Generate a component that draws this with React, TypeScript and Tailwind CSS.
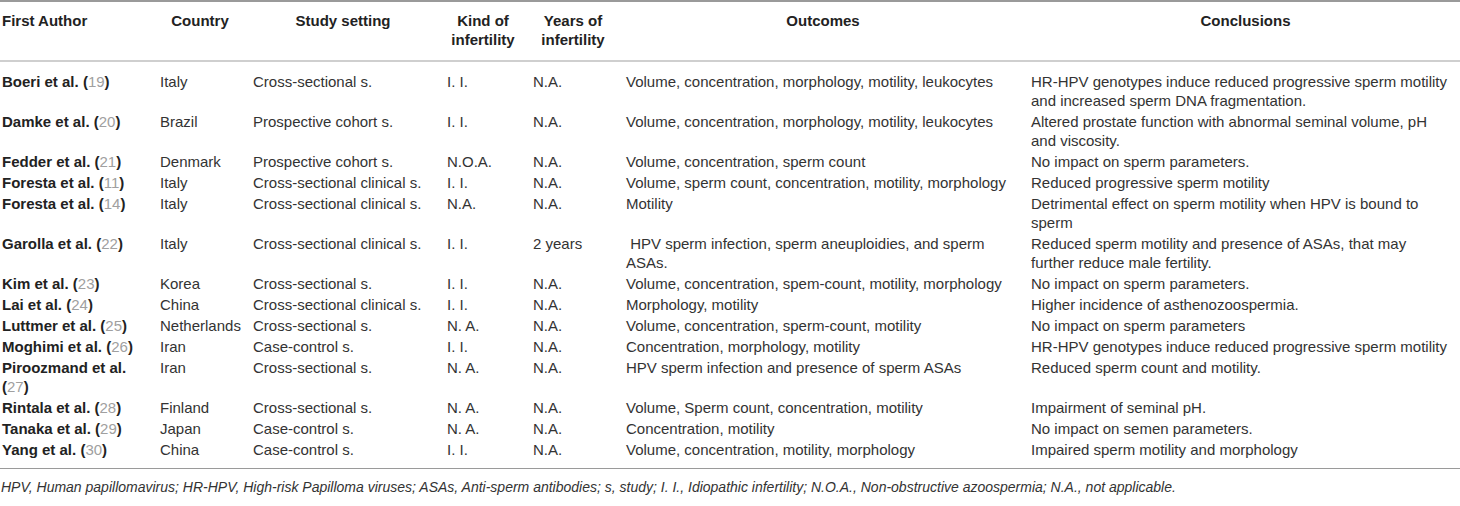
import React from "react";

type Row = {
  author: string;
  ref: string;
  breakRef?: boolean;
  country: string;
  setting: string;
  kind: string;
  years: string;
  outcomes: string[];
  conclusions: string[];
};

const rows: Row[] = [
  {
    author: "Boeri et al.",
    ref: "19",
    country: "Italy",
    setting: "Cross-sectional s.",
    kind: "I. I.",
    years: "N.A.",
    outcomes: ["Volume, concentration, morphology, motility, leukocytes"],
    conclusions: [
      "HR-HPV genotypes induce reduced progressive sperm motility",
      "and increased sperm DNA fragmentation.",
    ],
  },
  {
    author: "Damke et al.",
    ref: "20",
    country: "Brazil",
    setting: "Prospective cohort s.",
    kind: "I. I.",
    years: "N.A.",
    outcomes: ["Volume, concentration, morphology, motility, leukocytes"],
    conclusions: [
      "Altered prostate function with abnormal seminal volume, pH",
      "and viscosity.",
    ],
  },
  {
    author: "Fedder et al.",
    ref: "21",
    country: "Denmark",
    setting: "Prospective cohort s.",
    kind: "N.O.A.",
    years: "N.A.",
    outcomes: ["Volume, concentration, sperm count"],
    conclusions: ["No impact on sperm parameters."],
  },
  {
    author: "Foresta et al.",
    ref: "11",
    country: "Italy",
    setting: "Cross-sectional clinical s.",
    kind: "I. I.",
    years: "N.A.",
    outcomes: ["Volume, sperm count, concentration, motility, morphology"],
    conclusions: ["Reduced progressive sperm motility"],
  },
  {
    author: "Foresta et al.",
    ref: "14",
    country: "Italy",
    setting: "Cross-sectional clinical s.",
    kind: "N.A.",
    years: "N.A.",
    outcomes: ["Motility"],
    conclusions: [
      "Detrimental effect on sperm motility when HPV is bound to",
      "sperm",
    ],
  },
  {
    author: "Garolla et al.",
    ref: "22",
    country: "Italy",
    setting: "Cross-sectional clinical s.",
    kind: "I. I.",
    years: "2 years",
    outcomes: ["\u00a0HPV sperm infection, sperm aneuploidies, and sperm", "ASAs."],
    conclusions: [
      "Reduced sperm motility and presence of ASAs, that may",
      "further reduce male fertility.",
    ],
  },
  {
    author: "Kim et al.",
    ref: "23",
    country: "Korea",
    setting: "Cross-sectional s.",
    kind: "I. I.",
    years: "N.A.",
    outcomes: ["Volume, concentration, spem-count, motility, morphology"],
    conclusions: ["No impact on sperm parameters."],
  },
  {
    author: "Lai et al.",
    ref: "24",
    country: "China",
    setting: "Cross-sectional clinical s.",
    kind: "I. I.",
    years: "N.A.",
    outcomes: ["Morphology, motility"],
    conclusions: ["Higher incidence of asthenozoospermia."],
  },
  {
    author: "Luttmer et al.",
    ref: "25",
    country: "Netherlands",
    setting: "Cross-sectional s.",
    kind: "N. A.",
    years: "N.A.",
    outcomes: ["Volume, concentration, sperm-count, motility"],
    conclusions: ["No impact on sperm parameters"],
  },
  {
    author: "Moghimi et al.",
    ref: "26",
    country: "Iran",
    setting: "Case-control s.",
    kind: "I. I.",
    years: "N.A.",
    outcomes: ["Concentration, morphology, motility"],
    conclusions: ["HR-HPV genotypes induce reduced progressive sperm motility"],
  },
  {
    author: "Piroozmand et al.",
    ref: "27",
    breakRef: true,
    country: "Iran",
    setting: "Cross-sectional s.",
    kind: "N. A.",
    years: "N.A.",
    outcomes: ["HPV sperm infection and presence of sperm ASAs"],
    conclusions: ["Reduced sperm count and motility."],
  },
  {
    author: "Rintala et al.",
    ref: "28",
    country: "Finland",
    setting: "Cross-sectional s.",
    kind: "N. A.",
    years: "N.A.",
    outcomes: ["Volume, Sperm count, concentration, motility"],
    conclusions: ["Impairment of seminal pH."],
  },
  {
    author: "Tanaka et al.",
    ref: "29",
    country: "Japan",
    setting: "Case-control s.",
    kind: "N. A.",
    years: "N.A.",
    outcomes: ["Concentration, motility"],
    conclusions: ["No impact on semen parameters."],
  },
  {
    author: "Yang et al.",
    ref: "30",
    country: "China",
    setting: "Case-control s.",
    kind: "I. I.",
    years: "N.A.",
    outcomes: ["Volume, concentration, motility, morphology"],
    conclusions: ["Impaired sperm motility and morphology"],
  },
];

const Lines = ({ lines }: { lines: string[] }) => (
  <>
    {lines.map((l, i) => (
      <div key={i}>{l}</div>
    ))}
  </>
);

export default function App() {
  return (
    <div className="w-[1460px] h-[506px] bg-white text-[#333] font-['Liberation_Sans',Arial,sans-serif] text-[15px] leading-[19px] overflow-hidden">
      <table className="w-[1460px] table-fixed border-collapse">
        <colgroup>
          <col className="w-[160px]" />
          <col className="w-[93px]" />
          <col className="w-[194px]" />
          <col className="w-[86px]" />
          <col className="w-[93px]" />
          <col className="w-[405px]" />
          <col className="w-[429px]" />
        </colgroup>
        <thead>
          {/* header row */}
          <tr className="border-t-2 border-t-[#9a9a9a] border-b-2 border-b-[#cfcfcf] align-top text-[#222]">
            <th className="pl-[2px] pt-[9px] pb-[11px] text-left font-bold">First Author</th>
            <th className="pr-[13px] pt-[9px] pb-[11px] text-center font-bold">Country</th>
            <th className="pr-[14px] pt-[9px] pb-[11px] text-center font-bold">Study setting</th>
            <th className="pr-[14px] pt-[9px] pb-[11px] text-center font-bold">
              Kind of
              <br />
              infertility
            </th>
            <th className="pr-[13px] pt-[9px] pb-[11px] text-center font-bold">
              Years of
              <br />
              infertility
            </th>
            <th className="pr-[11px] pt-[9px] pb-[11px] text-center font-bold">Outcomes</th>
            <th className="pt-[9px] pb-[11px] text-center font-bold">Conclusions</th>
          </tr>
        </thead>
        <tbody className="border-b border-b-[#9a9a9a]">
          {rows.map((r, i) => {
            const pad =
              i === 0 ? "pt-[10px] pb-[1px]" : i === rows.length - 1 ? "pt-[1px] pb-[9px]" : "py-[1px]";
            return (
              <tr key={i} className="align-top whitespace-nowrap">
                <td className={`pl-[2px] ${pad}`}>
                  <span className="font-bold text-[#222]">{r.author}</span>
                  {r.breakRef ? <br /> : " "}
                  <span className="font-bold text-[#222]">(</span>
                  <span className="text-[#a0a0a0]">{r.ref}</span>
                  <span className="font-bold text-[#222]">)</span>
                </td>
                <td className={pad}>{r.country}</td>
                <td className={pad}>{r.setting}</td>
                <td className={pad}>{r.kind}</td>
                <td className={pad}>{r.years}</td>
                <td className={pad}>
                  <Lines lines={r.outcomes} />
                </td>
                <td className={pad}>
                  <Lines lines={r.conclusions} />
                </td>
              </tr>
            );
          })}
        </tbody>
      </table>
      {/* footnote */}
      <p className="pl-[1px] pt-[9px] italic text-[14px] whitespace-nowrap">
        HPV, Human papillomavirus; HR-HPV, High-risk Papilloma viruses; ASAs, Anti-sperm antibodies; s, study; I. I.,
        Idiopathic infertility; N.O.A., Non-obstructive azoospermia; N.A., not applicable.
      </p>
    </div>
  );
}
